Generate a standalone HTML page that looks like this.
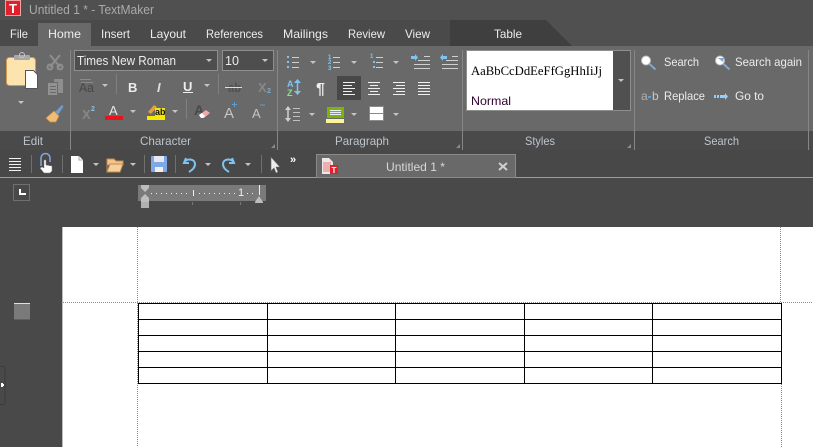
<!DOCTYPE html>
<html><head><meta charset="utf-8"><style>
html,body{margin:0;padding:0;width:813px;height:447px;overflow:hidden;background:#494949}
svg{display:block;position:absolute;left:0;top:0}
text{font-family:"Liberation Sans",sans-serif;font-size:12px;fill:#ececec}
.l{fill:#bcc4cc}
</style></head><body>
<svg width="813" height="447" viewBox="0 0 813 447">
<defs>
<path id="dd" d="M0 0h6l-3 3z" fill="#c4c4c4"/>
</defs>
<!-- title bar -->
<rect width="813" height="46" fill="#505050"/>
<rect y="20" width="450" height="26" fill="#4a4a4a"/>
<rect x="5.500" y="0.500" width="15" height="15" fill="#e0202c" stroke="#f0a0a0"/>
<text x="13" y="13" text-anchor="middle" style="font-size:13px;font-weight:bold;fill:#fff">T</text>
<text x="29" y="14" textLength="125" lengthAdjust="spacingAndGlyphs" style="font-size:13px;fill:#aaa">Untitled 1 * - TextMaker</text>
<!-- tabs -->
<rect x="38" y="23" width="53" height="23" fill="#696969"/>
<path d="M450 20H546L572 46H450Z" fill="#3f3f3f"/>
<text x="10" y="38" textLength="18" lengthAdjust="spacingAndGlyphs">File</text>
<text x="48" y="38" textLength="33" lengthAdjust="spacingAndGlyphs">Home</text>
<text x="101" y="38" textLength="29" lengthAdjust="spacingAndGlyphs">Insert</text>
<text x="150" y="38" textLength="36" lengthAdjust="spacingAndGlyphs">Layout</text>
<text x="206" y="38" textLength="57" lengthAdjust="spacingAndGlyphs">References</text>
<text x="283" y="38" textLength="45" lengthAdjust="spacingAndGlyphs">Mailings</text>
<text x="348" y="38" textLength="37" lengthAdjust="spacingAndGlyphs">Review</text>
<text x="405" y="38" textLength="25" lengthAdjust="spacingAndGlyphs">View</text>
<text x="494" y="38" textLength="28" lengthAdjust="spacingAndGlyphs">Table</text>
<!-- ribbon -->
<rect y="46" width="813" height="85" fill="#696969"/>
<rect y="131" width="813" height="19" fill="#4a4a4a"/>
<g fill="#868686">
<rect x="70" y="50" width="1" height="100"/>
<rect x="277" y="50" width="1" height="100"/>
<rect x="462" y="50" width="1" height="100"/>
<rect x="634" y="50" width="1" height="100"/>
<rect x="808" y="50" width="1" height="100"/>
</g>
<text class="l" x="23" y="145" textLength="20" lengthAdjust="spacingAndGlyphs">Edit</text>
<text class="l" x="140" y="145" textLength="51" lengthAdjust="spacingAndGlyphs">Character</text>
<text class="l" x="335" y="145" textLength="54" lengthAdjust="spacingAndGlyphs">Paragraph</text>
<text class="l" x="525" y="145" textLength="30" lengthAdjust="spacingAndGlyphs">Styles</text>
<text class="l" x="704" y="145" textLength="35" lengthAdjust="spacingAndGlyphs">Search</text>
<g fill="#8a8a8a">
<path d="M275 148h-4l4-4z"/><path d="M460 148h-4l4-4z"/><path d="M631 148h-4l4-4z"/>
</g>
<!-- clipboard -->
<rect x="6.500" y="57.500" width="29" height="28" rx="3" fill="#fde4af" stroke="#d39a50"/>
<rect x="14" y="55" width="16" height="5" rx="1" fill="#a8a8a8"/>
<circle cx="22" cy="55" r="2.500" fill="none" stroke="#c8c8c8"/>
<path d="M25.500 70.500h8l4 4v14h-12z" fill="#fff" stroke="#555"/>
<use href="#dd" x="18" y="101"/>
<!-- scissors -->
<g fill="none" stroke="#8e8e8e" stroke-width="2">
<path d="M50 55l10 12M60 55l-10 12"/>
<circle cx="50" cy="67" r="2.500"/><circle cx="60" cy="67" r="2.500"/>
</g>
<!-- copy -->
<path d="M54 79h9v14H54z" fill="#8e8e8e"/>
<path d="M47.500 82.500h10v13h-10z" fill="#929292" stroke="#6a6a6a"/>
<path d="M50 86.500h6M50 89.500h6M50 92.500h6" stroke="#6a6a6a"/>
<!-- brush -->
<path d="M55 112l7-7 1.500 1.500-5 8z" fill="#6a9fd0"/>
<path d="M46 118l8-7 5 5-3 6-6 0z" fill="#f0bd78" stroke="#c08a40" stroke-width=".7"/>
<!-- font combos -->
<rect x="74.500" y="50.500" width="143" height="20" fill="#4e4e4e" stroke="#8e8e8e"/>
<text x="77" y="65" textLength="99" lengthAdjust="spacingAndGlyphs" style="font-size:13px">Times New Roman</text>
<use href="#dd" x="206" y="59"/>
<rect x="222.500" y="50.500" width="51" height="20" fill="#4e4e4e" stroke="#8e8e8e"/>
<text x="225" y="65" textLength="14" lengthAdjust="spacingAndGlyphs" style="font-size:13px">10</text>
<use href="#dd" x="262" y="59"/>
<!-- row 2 char -->
<path d="M80 79.500h11M81 82.500h12" stroke="#8a8a8a" fill="none"/>
<text x="79" y="92" textLength="15" lengthAdjust="spacingAndGlyphs" style="font-size:13px;fill:#484848;">Aa</text>
<use href="#dd" x="102" y="84"/>
<rect x="116" y="74" width="1" height="20" fill="#808080"/>
<text x="128" y="92" style="font-size:13px;font-weight:bold">B</text>
<text x="157" y="92" style="font-size:13px;font-weight:bold;font-style:italic;fill:#ddd">I</text>
<text x="183" y="91" style="font-size:13px;font-weight:bold">U</text>
<rect x="183" y="92" width="10" height="1" fill="#eee"/>
<use href="#dd" x="204" y="84"/>
<rect x="218" y="74" width="1" height="20" fill="#808080"/>
<text x="228" y="92" style="font-size:13px;font-weight:bold;fill:#505050" textLength="13" lengthAdjust="spacingAndGlyphs">ab</text>
<rect x="225" y="87" width="17" height="1" fill="#ddd"/>
<text x="258" y="92" style="font-size:13px;font-weight:bold;fill:#888">X</text>
<text x="267" y="93" style="font-size:7px;font-weight:bold;fill:#6fb0e0">2</text>
<!-- row 3 char -->
<text x="82" y="119" style="font-size:13px;font-weight:bold;fill:#888">X</text>
<text x="91" y="111" style="font-size:7px;font-weight:bold;fill:#8fc0e0">2</text>
<text x="109" y="115" style="font-size:13px;fill:#e8e8e8">A</text>
<rect x="105" y="116" width="18" height="4" fill="#e8141c"/>
<use href="#dd" x="130" y="110"/>
<path d="M148 112l6-7 3 2-6 7z" fill="#e8a030"/>
<rect x="155" y="108" width="10" height="8" fill="#f0e020"/>
<text x="155" y="115" style="font-size:9px;font-weight:bold;fill:#111">ab</text>
<rect x="147" y="116" width="18" height="4" fill="#f4ea00"/>
<use href="#dd" x="172" y="110"/>
<rect x="186" y="99" width="1" height="20" fill="#808080"/>
<text x="194" y="115" style="font-size:14px;font-weight:bold;fill:#484848">A</text>
<path d="M199 115l7-5 4 3-6 5h-3z" fill="#f0a8a8"/>
<path d="M199 115l3-2 3 3-2 2h-2z" fill="#fff"/>
<text x="224" y="118" style="font-size:15px;fill:#c4c4c4">A</text>
<path d="M232 104.500h5M234.500 102v5" stroke="#5a9fd8"/>
<text x="252" y="118" style="font-size:13px;fill:#c4c4c4">A</text>
<path d="M260 105h5" stroke="#5a9fd8"/>
<!-- paragraph row 1 -->
<g fill="none" stroke="#d0d0d0">
<path d="M292 57.500h7M292 62.500h7M292 67.500h7"/>
<path d="M333 57.500h7M333 62.500h7M333 67.500h7"/>
<path d="M376 57.500h7M376 62.500h7M376 67.500h7"/>
<path d="M418 60.500h12M414 64.500h16M414 68.500h16M424 56.500h6"/>
<path d="M446 60.500h12M442 64.500h16M442 68.500h16M452 56.500h6"/>
</g>
<g fill="#7fc4f0">
<rect x="287" y="56" width="2" height="2"/><rect x="287" y="61" width="2" height="2"/><rect x="287" y="66" width="2" height="2"/>
<rect x="373" y="61" width="2" height="2"/><rect x="373" y="66" width="2" height="2"/>
<path d="M411 56h4v-2l3 3.500-3 3.500v-2h-4z"/>
<path d="M447 56h-4v-2l-3 3.500 3 3.500v-2h4z"/>
</g>
<text x="328" y="59" style="font-size:6px;font-weight:bold;fill:#7fc4f0">1</text>
<text x="328" y="64" style="font-size:6px;font-weight:bold;fill:#7fc4f0">2</text>
<text x="328" y="70" style="font-size:6px;font-weight:bold;fill:#7fc4f0">3</text>
<text x="370" y="58" style="font-size:6px;font-weight:bold;fill:#7fc4f0">1</text>
<use href="#dd" x="310" y="61"/><use href="#dd" x="351" y="61"/><use href="#dd" x="393" y="61"/>
<!-- paragraph row 2 -->
<text x="287" y="87" style="font-size:9px;font-weight:bold;fill:#7fc4f0">A</text>
<text x="287" y="96" style="font-size:9px;font-weight:bold;fill:#8ce08c">Z</text>
<path d="M297.500 81v12" stroke="#7fc4f0" stroke-width="1.500"/>
<path d="M294 83l3.500-4 3.500 4zM294 91l3.500 4 3.500-4z" fill="#7fc4f0"/>
<text x="316" y="94" style="font-size:16px;font-weight:bold;fill:#eee">¶</text>
<rect x="337" y="76" width="24" height="24" fill="#484848"/>
<g stroke="#f0f0f0" fill="none">
<path d="M343 82.500h12M343 85.500h9M343 88.500h12M343 91.500h9M343 94.500h12"/>
<path d="M368 82.500h12M370 85.500h8M368 88.500h12M370 91.500h8M368 94.500h12"/>
<path d="M393 82.500h12M396 85.500h9M393 88.500h12M396 91.500h9M393 94.500h12"/>
<path d="M418 82.500h12M418 85.500h12M418 88.500h12M418 91.500h12M418 94.500h12"/>
</g>
<!-- paragraph row 3 -->
<path d="M288 108v12" stroke="#d0d0d0" stroke-width="1.500"/>
<path d="M285 110l3-4 3 4zM285 118l3 4 3-4z" fill="#d0d0d0"/>
<path d="M293 108.500h7M293 112.500h7M293 116.500h7M293 120.500h7" stroke="#c0c0c0"/>
<use href="#dd" x="309" y="113"/>
<rect x="327" y="107" width="17" height="11" fill="#7ab800"/>
<path d="M330 110.500h11M330 112.500h11M330 114.500h11" stroke="#eef"/>
<rect x="326" y="119" width="18" height="4" fill="#fbf5a0"/>
<use href="#dd" x="351" y="113"/>
<rect x="369.500" y="106.500" width="14" height="14" fill="#fff" stroke="#8a8a8a"/>
<path d="M369 113.500h15" stroke="#8a8a8a"/>
<use href="#dd" x="393" y="113"/>
<!-- styles -->
<rect x="466.500" y="50.500" width="164" height="60" fill="#505050" stroke="#8e8e8e"/>
<rect x="467" y="51" width="146" height="59" fill="#fff"/>
<text x="471" y="75" textLength="131" lengthAdjust="spacingAndGlyphs" style="font-family:'Liberation Serif',serif;font-size:13px;fill:#000">AaBbCcDdEeFfGgHhIiJj</text>
<text x="471" y="105" textLength="40" lengthAdjust="spacingAndGlyphs" style="font-size:12px;fill:#300030">Normal</text>
<use href="#dd" x="618" y="79"/>
<!-- search -->
<circle cx="646" cy="60.500" r="4.500" fill="#fff" stroke="#bbb"/>
<path d="M649.500 64l6 5.500" stroke="#7fa8d8" stroke-width="2"/>
<circle cx="720" cy="60.500" r="4.500" fill="#fff" stroke="#bbb"/>
<path d="M718 58h6l-1 4z" fill="#7fa8d8"/>
<path d="M723.500 64l6 5.500" stroke="#7fa8d8" stroke-width="2"/>
<text x="664" y="66" textLength="35" lengthAdjust="spacingAndGlyphs">Search</text>
<text x="735" y="66" textLength="67" lengthAdjust="spacingAndGlyphs">Search again</text>
<text x="641" y="100" style="font-size:12px;fill:#b0b0b0">a</text>
<text x="652" y="100" style="font-size:12px;fill:#c8c8c8">b</text>
<rect x="648" y="96" width="3" height="2" fill="#5a9fd8"/>
<text x="664" y="100" textLength="41" lengthAdjust="spacingAndGlyphs">Replace</text>
<path d="M714 95h2v3h-2zM717 95h2v3h-2zM720 95h5v-2l3 3.500-3 3.500v-2h-5z" fill="#8fd0ff"/>
<text x="735" y="100" textLength="29" lengthAdjust="spacingAndGlyphs">Go to</text>
<!-- QAT -->
<rect y="150" width="813" height="27" fill="#484848"/>
<rect y="177" width="813" height="1" fill="#9a9a9a"/>
<path d="M9 158.500h12M9 161.500h12M9 164.500h12M9 167.500h12M9 170.500h12" stroke="#f0f0f0"/>
<rect x="31" y="155" width="1" height="18" fill="#707070"/>
<path d="M41 166v-8a4.500 4.500 0 0 1 9 0v4" fill="none" stroke="#7fa8e0" stroke-width="1.500"/>
<path d="M44 160h2v5l6 1v5l-2 2h-6l-4-5 2-1 2 1z" fill="#fff" stroke="#777" stroke-width=".5"/>
<rect x="62" y="155" width="1" height="18" fill="#707070"/>
<path d="M71 156h8l4 4v13H71z" fill="#fff"/>
<path d="M79 156v4h4" fill="none" stroke="#aaa"/>
<use href="#dd" x="93" y="163"/>
<path d="M107 172v-13h7l2 2h7v4h-16z" fill="#f3c48a" stroke="#c08a50"/>
<path d="M107 172l3-8h13l-3 8z" fill="#f5cf9c" stroke="#c08a50"/>
<use href="#dd" x="130" y="163"/>
<rect x="144" y="155" width="1" height="18" fill="#707070"/>
<rect x="151" y="156" width="16" height="16" rx="1" fill="#7ea8e8"/>
<rect x="154" y="156" width="10" height="6" fill="#e8e8f0"/>
<rect x="155" y="167" width="8" height="5" fill="#f0f0f0"/>
<rect x="175" y="155" width="1" height="18" fill="#707070"/>
<path d="M186 158l-2 5 5 0M184 162c4-4 11-3 11 2 0 4-3 6-6 8" fill="none" stroke="#7fc4f0" stroke-width="2"/>
<use href="#dd" x="205" y="163"/>
<path d="M232 158l2 5-5 0M234 162c-4-4-11-3-11 2 0 4 3 6 6 8" fill="none" stroke="#7fc4f0" stroke-width="2"/>
<use href="#dd" x="245" y="163"/>
<rect x="261" y="155" width="1" height="18" fill="#707070"/>
<path d="M271 157v14l3-3 2 5 2-1-2-5h4z" fill="#eee" stroke="#666" stroke-width=".6"/>
<text x="290" y="163" style="font-size:11px;font-weight:bold;fill:#fff">»</text>
<!-- doc tab -->
<rect x="316.500" y="154.500" width="199" height="23" fill="#696969" stroke="#8a8a8a"/>
<path d="M322 158h7l4 4v12h-11z" fill="#f0e8e8"/>
<path d="M323 163h8M323 165h8M323 167h8M323 169h8M323 171h8" stroke="#e87878"/>
<rect x="330" y="165" width="8" height="9" fill="#e0202c"/>
<text x="331.500" y="173" style="font-size:8px;font-weight:bold;fill:#fff">T</text>
<text x="386" y="171" textLength="59" lengthAdjust="spacingAndGlyphs" style="fill:#d8d8d8">Untitled 1 *</text>
<path d="M499 163l8 7M507 163l-8 7" stroke="#d0d0d0" stroke-width="2"/>
<!-- ruler -->
<rect x="13.500" y="184.500" width="16" height="16" fill="none" stroke="#707070"/>
<path d="M20 189v5h6" fill="none" stroke="#fff" stroke-width="2"/>
<rect x="138" y="185" width="128" height="16" fill="#7a7a7a"/>
<g fill="#f0f0f0">
<rect x="151" y="193" width="1" height="1"/><rect x="156" y="193" width="1" height="1"/><rect x="161" y="193" width="1" height="1"/><rect x="166" y="193" width="1" height="1"/><rect x="171" y="193" width="1" height="1"/><rect x="176" y="193" width="1" height="1"/><rect x="181" y="193" width="1" height="1"/><rect x="186" y="193" width="1" height="1"/>
<rect x="193" y="190" width="1" height="6"/>
<rect x="199" y="193" width="1" height="1"/><rect x="204" y="193" width="1" height="1"/><rect x="209" y="193" width="1" height="1"/><rect x="214" y="193" width="1" height="1"/><rect x="219" y="193" width="1" height="1"/><rect x="224" y="193" width="1" height="1"/><rect x="229" y="193" width="1" height="1"/><rect x="234" y="193" width="1" height="1"/>
<rect x="247" y="193" width="1" height="1"/><rect x="252" y="193" width="1" height="1"/>
<rect x="259" y="185" width="1" height="10"/>
</g>
<text x="238" y="196" style="font-size:11px;fill:#f0f0f0">1</text>
<rect x="192" y="202" width="1" height="3" fill="#777"/><rect x="240" y="202" width="1" height="3" fill="#777"/>
<path d="M141 185h8v3l-4 4-4-4z" fill="#bdbdbd"/>
<path d="M141 202v-4l4-4 4 4v4z" fill="#bdbdbd"/>
<rect x="141" y="202" width="8" height="6" fill="#b0b0b0"/>
<path d="M255 202l4-6 4 6z M255 202h8v1h-8z" fill="#bdbdbd"/>
<!-- page -->
<rect x="62" y="227" width="751" height="220" fill="#fff"/>
<rect x="62" y="227" width="1" height="220" fill="#bbb"/>
<path d="M63 302.500H813" stroke="#8a8a8a" stroke-dasharray="1 1"/>
<path d="M137.500 227V447M780.500 227V303M781.500 384V447" stroke="#8a8a8a" stroke-dasharray="1 1"/>
<!-- table -->
<g stroke="#000" fill="none">
<path d="M138.500 303.500H781.500M138.500 319.500H781.500M138.500 335.500H781.500M138.500 351.500H781.500M138.500 367.500H781.500M138.500 383.500H781.500"/>
<path d="M138.500 303V384M267.500 303V384M395.500 303V384M524.500 303V384M652.500 303V384M781.500 303V384"/>
</g>
<!-- left margin -->
<rect x="14" y="303" width="16" height="17" fill="#7a7a7a"/>
<rect x="14" y="303" width="16" height="1" fill="#e0e0e0"/>
<rect x="14" y="319" width="16" height="1" fill="#606060"/>
<rect x="-4" y="366.500" width="9" height="38" rx="2" fill="none" stroke="#3c3c3c"/>
<path d="M1 383h2v1h1v2h-1v1H1z" fill="#fff"/>
</svg>
</body></html>
